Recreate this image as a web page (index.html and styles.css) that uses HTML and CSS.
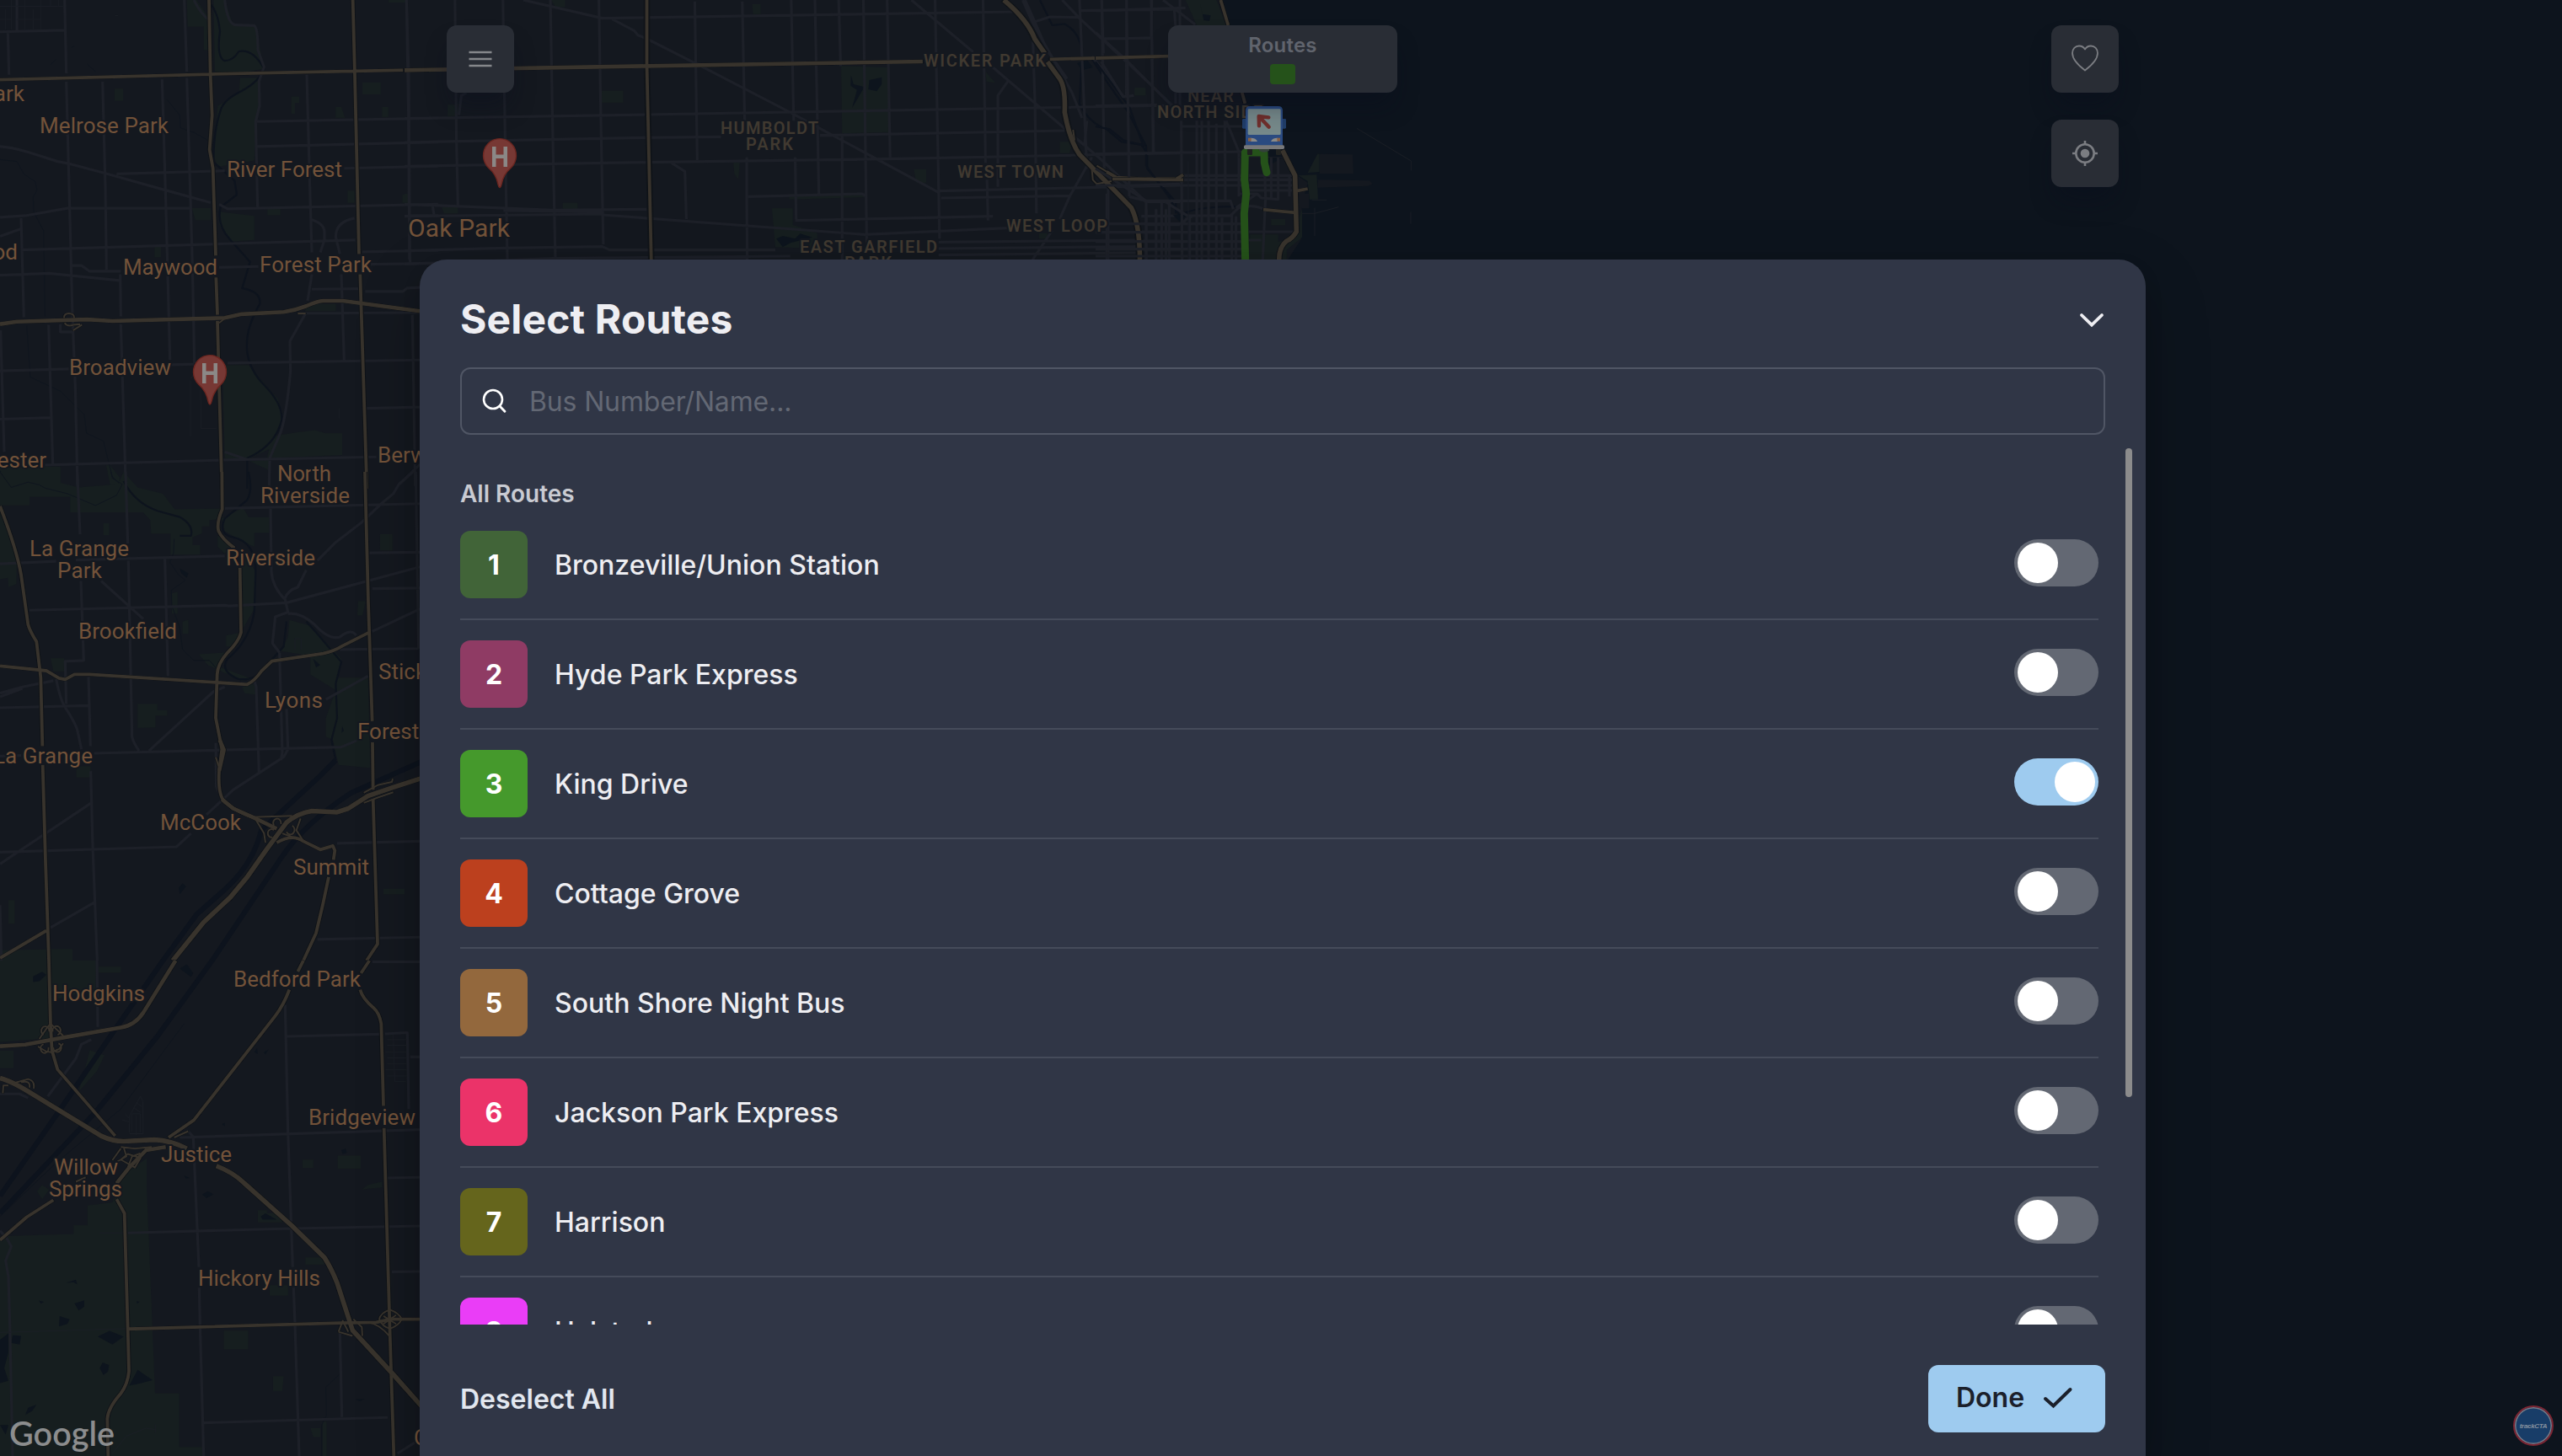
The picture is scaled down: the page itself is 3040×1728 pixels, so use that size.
FILE: index.html
```html
<!DOCTYPE html>
<html lang="en">
<head>
<meta charset="utf-8">
<title>trackCTA</title>
<link rel="stylesheet" href="styles.css">
</head>
<body>
<svg class="map" viewBox="0 0 3040 1728" width="3040" height="1728" aria-hidden="true">
  <defs>
    <g id="hw-a">
      <path class="w4" d="M744,0L749,240L755,370L746,480L758,540L768,820M769,890L774,1010M774,1030L790,1568M1256,0L1263,240L1278,815M1282,880L1306,1568M0,256L750,238L1260,228L1560,223"/>
      <path class="w5" d="M0,1040L60,1032L310,1025L400,1030L800,1020L860,1008L1010,1001Q1050,996 1090,982Q1130,966 1150,965L1220,965L1500,999"/>
      <path class="w3" d="M228,1020Q228,1006 245,1006Q264,1006 264,1020M230,1036Q240,1050 262,1042L285,1040M260,1060L292,1042M800,1022L780,1036M1060,1006L1088,1006"/>
    </g>
    <g id="hw-b">
      <path class="w4" d="M790,0L791,120Q770,165 778,190Q790,215 835,245M854,308L858,515Q850,545 810,580Q775,615 773,650L768,790L790,890L780,960Q775,1035 800,1060Q850,1095 900,1108M1299,0L1311,420L1325,800M1326,868L1328,1020M1328,1050L1344,1515L1305,1568M0,110Q60,250 75,330L100,490Q106,510 130,545L145,660L151,880M152,940L162,1250L174,1568M0,623L165,638L210,662L232,666L265,650L320,650L880,682Q905,672 930,640L968,607L1150,583Q1190,575 1220,558L1312,516M985,1190Q1040,1160 1080,1185L1140,1212L1185,1200L1192,1215L1187,1245M1170,1300Q1150,1390 1125,1480L1080,1568M0,1560L165,1472"/>
      <path class="w5" d="M782,860L797,892L780,960M790,1050L830,1080L900,1108L985,1145"/>
      <path class="w6" d="M615,1568L725,1445L820,1365L880,1300L950,1210L1020,1125Q1060,1095 1110,1088L1200,1092L1240,1080L1310,1040L1400,1012L1500,983"/>
      <path class="w3" d="M900,1108L1040,1104M910,1115L940,1160L945,1190M1070,1112L1055,1150L1080,1185M768,915L778,945M1295,1030L1345,1005L1395,995L1398,985M1295,1062L1345,1045L1400,1028M975,1135A14,14 0 1 1 1000,1130M970,1172A13,13 0 1 1 975,1150M1020,1155A15,15 0 1 0 1040,1135M1005,1160L1080,1185"/>
    </g>
    <g id="hw-c">
      <path class="w4" d="M174,0L180,205L185,285M185,285L205,345L410,555M1080,0L1060,35M1030,92Q1010,140 980,175L690,505L600,560M1315,0L1285,40M1282,92Q1290,120 1330,150Q1350,165 1357,200L1365,460M1367,530L1388,1180L1402,1568M0,885L95,812L190,758M415,755L443,800L455,1166L459,1300Q455,1340 430,1370Q385,1415 382,1450L385,1568M455,1166L1210,1147L1340,1145L1390,1135L1495,1135"/>
      <path class="w5" d="M625,0L510,165Q480,205 430,212L230,243L90,266L0,271M590,590L520,600L460,655L415,705"/>
      <path class="w6" d="M0,372Q40,380 120,425L360,555Q400,572 440,572L550,567Q610,570 665,595M770,650Q830,670 870,705L1040,840L1155,940Q1180,975 1200,1020L1255,1170L1400,1310L1500,1410"/>
      <path class="w3" d="M140,248L168,212L180,200L198,215L225,238M135,272L165,288L185,290L210,280L225,262M155,235A14,14 0 1 1 175,225M188,225A14,14 0 1 1 205,235M155,265A14,14 0 1 0 172,275M190,275A14,14 0 1 0 208,262M40,390L100,375Q125,380 120,405M75,385Q110,378 105,402M10,420L12,395L30,395M430,590L480,595L540,590M400,632L430,595M410,640L450,620L440,590M430,630L480,655L500,625L455,612ZM455,655L470,620L500,610M620,560L670,540M1350,1135Q1355,1115 1388,1105Q1420,1115 1430,1135Q1420,1155 1388,1165Q1360,1158 1350,1135M1365,1125L1410,1150M1410,1122L1365,1150M1310,1145Q1350,1150 1388,1190M1205,1175L1220,1140L1240,1175M1205,1175L1255,1188M1290,1188L1288,1160L1258,1135M270,700L305,686"/>
    </g>
    <g id="hw-d">
      <path class="w4" d="M490,0L490,230L499,925M1305,211L1568,200M1420,612L1440,632L1500,637L1568,637"/>
      <path class="w5" d="M0,250L490,235L1048,219"/>
      <path class="w6" d="M1212,0Q1260,70 1275,140L1295,190M1300,220L1325,280Q1337,310 1335,400Q1345,500 1365,550L1470,740Q1487,800 1487,925"/>
      <path class="w3" d="M1390,600L1392,640L1400,655L1430,645M1400,590L1440,632L1438,648M1352,462L1355,500"/>
    </g>
    <g id="hw-e">
      <path class="w4" d="M445,0L472,90M520,325L532,368M0,207L258,200M60,637L312,640M288,637L312,622M715,680L755,672M597,746L710,757"/>
      <path class="w6" d="M665,535L710,625L715,825Q700,850 680,858Q653,880 653,925"/>
    </g>
  </defs>

  <rect class="land" width="3040" height="1728"/>
  <path class="water" d="M1447,0L1460,30L1476,110L1500,200L1525,185L1537,207L1552,217L1545,240L1544,284L1527,310V1728H3040V0Z"/>

  <g transform="scale(.333333 .3699)">
    <path class="park" d="M665,0H700L745,60V160H725V85H668ZM760,0H800L830,80L910,85L940,220L850,235L765,232ZM855,250H925V340L910,390L905,515L775,535L760,500L775,340L850,300ZM785,680L905,693V770L820,775L780,720ZM683,668H750V706H695ZM792,1172H885L990,1280L1005,1340L960,1440L880,1475L800,1470ZM970,1400L1050,1388L1120,1380L1160,1390H1218V1460L950,1470ZM1100,975H1195V998H1085ZM1290,265H1355V303H1290ZM408,285H438V323H408ZM1037,310H1065V330H1050V365H1037ZM1195,343H1215L1228,378H1195ZM1360,343H1382V375H1360ZM1237,612H1262V650H1237ZM1432,625H1452V650H1432ZM952,670H998V690H952ZM550,790H573V825H550ZM0,1500L215,1497V1568H0ZM378,1493H392L425,1530V1568H395ZM890,1480L960,1475V1510ZM1383,0H1445V8H1383Z"/>
    <path class="river" d="M740,5Q775,30 783,100Q770,185 800,195Q830,195 850,165Q900,155 940,220Q925,260 860,292Q795,320 785,355Q760,420 760,520L835,580L843,625L785,665Q770,720 820,770L890,840L862,925Q930,935 925,975Q870,1060 880,1130Q890,1190 940,1235Q1010,1300 1002,1350Q980,1430 880,1470V1568"/>
    <path class="creek" d="M0,512L60,518L85,558L125,582L132,610L118,632L120,680L155,740L160,1015M95,1045L108,1210L215,1255L300,1330L308,1390L368,1415L400,1530L435,1560M0,1510L40,1565L100,1548L160,1560M595,320L640,370L642,410L690,425L740,450M180,208L200,190M310,205L340,230M255,152L265,148"/>
    <path class="road" d="M28,105L32,240M0,102L230,97M230,0L236,235M236,262L248,670L258,1015L268,1240L276,1568M365,262L375,600L379,865M577,255L590,640L605,1155M656,0L665,230M665,250L685,850L692,1165M1092,240L1103,600L1110,810M915,390L1560,379M915,470L1560,456M1225,540L1560,533M0,470Q40,472 100,488L205,518L240,524L370,555L580,608L750,650M780,655L810,670L1560,655M415,558L800,548M0,697L90,692L240,668H680M0,758L75,734M75,700L85,1018M75,802L800,782L1265,770M1290,808L1560,803M255,852H290L318,870H430M0,883L175,877L425,900M428,880L430,1015M430,1040L448,1568M780,858L920,855M1320,848L1560,845M1110,928L1290,926M1300,935H1435L1450,924L1495,922M1110,705Q1155,718 1155,745V770L1140,810M1262,700Q1195,712 1195,760L1210,815M1110,880L1095,965M1215,880L1225,1155M1088,1005L1495,1003M1088,1005L1032,1095L1034,1190Q1020,1330 1000,1385L960,1470L958,1568M810,1165L1495,1155M608,1170L690,1168M0,1190L245,1184M0,1345L182,1340M173,1042L188,1490M2,1060L15,1450M160,1492L800,1476L1340,1466M800,1450L880,1475M1305,1310L1495,1306M1468,1010L1478,1560M1447,0L1455,230L1458,690L1460,850M690,0Q715,45 745,65M800,0Q810,80 840,80L905,82Q918,90 918,160L940,215L922,260L924,340L910,390L917,665M1495,1490L1420,1555M1540,660L1545,690M1460,692H1560M215,1040V1065H262M60,0V98"/>
    <path class="lane" d="M0,20H225M0,62H40M60,62H145M20,30V95M40,0V95M88,0V95M118,30V95M145,0V95M180,0V20M208,0V20M678,1220V1400M690,1200L680,1215M714,1250L716,1375H770M1208,1310V1343M410,50H420"/>
    <use href="#hw-a" class="casing"/><use href="#hw-a" class="hwy"/>
  </g>

  <g transform="translate(0 560) scale(.333333 .3699)">
    <path class="park" d="M0,0H215V35L280,50L420,40L440,0L490,50L580,70L622,120L790,118V150L745,155V175H718V198L685,210V235H712V265H607V198H538L535,155L510,130H250V80H105V107H0ZM0,130L50,240L60,300L58,360L30,370L28,340L0,345ZM865,115L885,145H958V195H905V240L865,225L800,190L790,150ZM775,205L830,235L800,262L775,240ZM860,250L910,320L905,440L860,510ZM805,525L860,515L830,560H805ZM708,585L800,580L780,625L900,665L860,670L740,620ZM1030,475L1110,495L1215,600L1200,660H1310L1318,950L1205,940L1185,860L1160,850V790L1195,700L1105,650V590L1000,575L1025,530ZM490,745H560V765H595V782H553V820L490,822ZM1353,200H1397V252H1353ZM180,598H228V640H190ZM1365,1338H1440V1355H1365ZM30,1375H52V1450H30ZM0,1535L258,1530V1568H0ZM368,165H388V203H368ZM612,390L632,385V455H612ZM650,480L670,475V520H650ZM1275,415H1302L1290,460H1272ZM862,690L905,680L910,715L870,710ZM272,945H322V980H272Z"/>
    <path class="canal" d="M1500,930L1250,1030Q1080,1130 1000,1240L755,1568M1195,925L1140,975L930,1150Q900,1260 800,1340L700,1420L580,1568"/>
    <path class="river" d="M885,0Q900,60 880,90L800,150Q775,200 830,210Q910,225 910,320L905,450Q890,540 810,600Q780,640 850,665Q910,670 940,630L1010,560L1020,480M1090,480L1130,520L1215,610L1195,680L1200,790L1180,860L1195,925M440,30Q480,100 560,125L640,145Q690,170 680,205H640"/>
    <path class="creek" d="M0,0L40,50L100,33L140,42L160,52L240,70L340,108L415,75L435,40L400,20L395,0M620,215L618,260L605,290L635,330L660,348L610,380L612,430L640,500L650,570L690,605H745L780,640"/>
    <path class="water" d="M640,310L670,325L665,340L645,325ZM1115,600L1140,620L1125,628ZM636,1335L650,1320L662,1330L640,1355ZM1218,815L1224,830L1216,838Z"/>
    <path class="road" d="M275,0L285,200M288,350L298,605L232,608L236,745M447,0L455,230M457,285L470,850Q475,870 495,895M587,280L598,655M0,295L200,287M270,283L800,270M105,444L800,428L815,430L1020,420L1495,305M360,350L510,472M0,757L315,750M315,658L322,880M323,960L330,1200L346,1568M0,710L80,690L190,670M0,722L80,695M200,665Q215,735 235,760Q275,815 278,840L290,890M335,903L1215,883L1270,862M530,895L760,705L800,690M1160,730L1310,655M905,670L912,690L922,965M995,580L1005,900L1000,925M1020,760L1025,890L1010,915L830,1020L735,1100M680,1160L628,1203L0,1220M0,1258L325,1062M180,1462L335,1382M0,1390L5,1568M768,870L770,1010L790,1050M800,117L1495,102M963,117L966,320Q970,370 1015,410L1025,450L980,465L970,550L995,580M1015,405Q1025,380 1060,370L1090,315M1130,285L1190,230L1290,160L1360,100L1400,70L1420,40L1470,0M1025,455Q1070,450 1120,490Q1170,540 1210,530Q1250,500 1268,525M1315,260L1495,258M1325,375L1495,373M1325,512L1495,440M1210,570L1490,567M1480,0L1490,567M1200,1192L1495,1185M1130,1500L1495,1493M0,912L75,910"/>
    <path class="lane" d="M1050,570V535H1072V570"/>
    <use href="#hw-b" class="casing"/><use href="#hw-b" class="hwy"/>
  </g>

  <g transform="translate(0 1140) scale(.333333 .375)">
    <path class="park" d="M0,0H340V90L190,125L180,245L0,258ZM350,20H430V38H350ZM0,285H48V340H0ZM320,283L372,300L345,350L280,415ZM20,872L262,865V838H312V775L400,765L445,670L500,640L522,625V710L552,1370H637V1540H720V1568H0V875ZM797,1172H883V1230H797ZM972,1315H1010L1005,1362H972ZM1202,617H1284V658H1202ZM1077,630H1115V656H1077ZM960,1028H1025V1060H960ZM918,790H950V800H1005V828H918ZM1087,940H1155V962H1087ZM1105,1480H1140V1508H1115ZM1148,1460H1162V1568H1148ZM132,730L150,710L175,725L150,755ZM1288,725L1310,710L1360,700V718L1310,722Z"/>
    <path class="canal" d="M755,0L560,240L340,480L0,800M580,0L400,230L200,490L0,745"/>
    <path class="creek" d="M655,200L430,470L200,640L0,810M1208,1310L1160,1350L1162,1440L1145,1470V1568"/>
    <path class="water" d="M118,50L150,35L165,45L140,65L118,68ZM640,25L665,12L688,40L680,52ZM265,1085L300,1075V1095L280,1107ZM212,1125L248,1135L240,1150L210,1158ZM348,1190L390,1172L440,1190L400,1215ZM355,1290L365,1272L388,1280L385,1300L368,1312ZM460,1345L490,1295L543,1328L490,1340ZM0,1200L30,1180V1240L15,1290L30,1330L0,1337ZM45,1185L75,1188L70,1215L40,1210ZM90,1438L100,1415L130,1405L115,1425ZM720,740L740,730L760,740L735,752ZM928,810L945,800L985,820L935,820ZM905,290L915,278L918,295ZM938,290L955,282L945,297ZM1215,600L1230,595L1235,608L1220,612ZM790,518L800,513V524ZM655,680L675,688L662,690ZM138,1076L156,1080L146,1086ZM486,1078L497,1080L488,1086ZM235,1020L270,1010L275,1025L262,1018ZM1265,1388L1298,1388L1280,1394ZM0,1470H30L20,1500Z"/>
    <path class="road" d="M345,0L348,210M325,250L290,265L270,310L170,430M1015,140L1025,540L1042,970M1045,1035L1050,1150L1065,1568M640,560L1495,535M688,560L708,970M709,1035L712,1150L725,1568M455,862L1040,848L1495,840M1020,240L1350,233M1370,232L1450,228L1455,470M1460,305H1495M1380,688L1495,686M1395,985L1495,984M725,1463L1380,1446M1210,1175L1217,1445M25,880L40,905L20,950L30,1000L35,1150L45,1568M0,422H70L100,435M670,540L690,560M1325,4H1495M1495,1515L1415,1560M0,855L25,880"/>
    <path class="lane" d="M0,1177L450,1165M355,862H455M1400,235L1405,383H1445M1378,250H1448M1378,268H1448M1372,290H1448M1378,308H1448M1378,326H1448M1372,345H1448M1378,365H1448M460,545L462,490L500,430L508,445L510,548H460M470,540V485H500V545M485,490V552M435,505L460,510M445,485L462,500M475,465L500,480M485,450L505,462M400,1560L450,1505L520,1480L555,1485M553,1468V1495"/>
    <use href="#hw-c" class="casing"/><use href="#hw-c" class="hwy"/>
  </g>

  <g transform="translate(480 0) scale(.58673 .333333)">
    <path class="park" d="M883,235L980,240V470L885,475ZM743,742H785V800L835,830V885L750,880ZM397,323H442V365H397ZM297,0H325V25H305ZM703,15H720V50H705ZM665,578H678L675,638L667,620ZM1030,603H1055V650H1035ZM1325,505H1350L1345,545H1325ZM320,722H350V745H320ZM75,738H108V760H80ZM87,373H108V413H87ZM0,690H8V722H0ZM1175,255L1195,295L1177,290ZM1477,312H1498V340H1477ZM778,690H930V702L778,710ZM1283,830H1300V850H1283Z"/>
    <path class="river" d="M1285,0L1310,90L1335,85Q1370,120 1370,200L1365,370Q1385,440 1420,460L1450,505L1490,515L1502,545V600L1520,640L1560,720V760M1390,210L1420,290L1460,390L1500,520"/>
    <path class="water" d="M1360,225L1380,212L1392,240L1370,250ZM940,285L965,275V300L955,325L938,318ZM903,268L908,300L930,310L920,340L905,385L915,320L902,305ZM752,850L765,840L790,850L800,832L825,845L780,865L765,880Z"/>
    <path class="road" d="M4,0L8,410L10,925M102,0L105,500L108,730M199,0L204,560L208,925M295,0L300,500L305,925M393,0L397,420L402,870M587,5L592,570M683,5L688,430M692,560V700L693,925M782,0L787,430M790,560L792,780M830,0L838,690M878,0L882,235M885,480V925M928,0L935,900M976,0L982,560M1073,0L1082,850M1170,0L1175,580M1178,640L1180,785M1270,100L1275,370L1278,760M0,422L490,408L1568,375M0,507L490,490L640,487M840,482L1335,465M0,592L490,578L1000,565L1568,545M695,700L925,690L935,700M1080,680L1568,660M1085,705L1345,697M790,785L1190,770M400,765L930,835L1220,812M0,727L300,748L490,745M0,770L400,762M200,750L400,755M0,893L200,883L400,878L415,890H750M0,940L300,920L780,912M1080,862L1480,855M1080,885L1480,878M1080,908L1480,900M240,0L400,65L1235,42M420,68L465,110L472,125L490,138L610,245L780,400L1080,685M1025,0L1150,185M1190,240L1410,570L1500,720M1330,0L1365,65L1460,220L1568,400M1365,38L1568,33M1250,0L1270,80L1350,330L1370,420M1255,0L1300,180L1340,280M1270,80L1305,60L1365,62M1415,138L1510,135M1390,200L1455,345L1475,340M1220,290L1200,340V665M540,580L567,610L570,780M1390,560L1345,700L1325,780M1310,820L1270,925M110,410L115,340L125,330M1365,0L1380,600M1410,0L1415,600M1460,0V345M1510,0L1515,540M1568,0V400M1423,660V925M1500,718H1568M1500,745V925M1520,745V925M1540,745V925M1500,800H1568M1490,825H1568M1490,858H1568M1490,888H1568M1380,430L1375,520M1490,770L1568,768"/>
    <use href="#hw-d" class="casing"/><use href="#hw-d" class="hwy"/>
  </g>

  <g transform="translate(1300 0) scale(.333333)">
    <path class="park" d="M320,0H430L465,90H360ZM138,315H178V340H138ZM790,548H797V612L755,615ZM722,625L787,622L792,710H762L755,645ZM550,835H650V925H545ZM735,745V845L680,890V925H550V880L700,850ZM625,780H675V802H625Z"/>
    <path class="land" d="M797,548L915,550L918,618H797ZM792,640L975,643L985,655L970,662L790,668ZM715,690H760V742H735L715,735Z"/>
    <path class="river" d="M0,450L50,460L100,500L180,520V590L260,700L300,770M0,220L120,380L170,520M300,770Q340,735 500,735"/>
    <path class="water" d="M372,12L380,50L410,55L405,75L385,72ZM275,765L330,760L300,790Z"/>
    <path class="road" d="M22,0L28,190M110,0L120,700M200,130L205,540M280,30L285,100M285,330V370M200,0L198,130M0,38L320,28M30,138L195,135M240,0L355,88M0,115L100,205L265,370M20,220L98,345L110,342M0,377L220,374M0,548L520,540M305,450H530M305,430L308,925M360,430V925M378,430V925M402,430V925M430,440V925M460,430L462,720M485,760V925M465,430L510,540V700M310,625H520M545,625H700M310,640H520M545,640H700M300,660H520M545,660H700M545,678H700M180,715H480L490,745M330,768H480L510,740Q560,725 600,745M510,690L575,690L590,705L650,710V560M575,690L500,740M600,560L605,700L595,925M625,560V710M690,620V700M0,660L130,660L300,655M0,600L180,715V925M120,700L180,715M235,720V925M262,720V925M40,690V925M250,720L330,770M310,800Q320,775 345,770M0,797H520M0,827H520M0,860H520M0,887H520M0,912H520M545,825H720M545,855H590M335,775V925M450,775V925M500,770V925"/>
    <path class="lane" d="M930,457L1123,573V607M1122,755V797M780,740V840M735,760H780L865,737M770,712H822M510,560H690M330,575V925"/>
    <use href="#hw-e" class="casing"/><use href="#hw-e" class="hwy"/>
  </g>

  <g class="hood">
    <text x="1096" y="79" textLength="145">WICKER PARK</text>
    <text x="855" y="159" textLength="116">HUMBOLDT</text>
    <text x="885" y="178" textLength="56">PARK</text>
    <text x="1136" y="211" textLength="126">WEST TOWN</text>
    <text x="1194" y="275" textLength="120">WEST LOOP</text>
    <text x="949" y="300" textLength="163">EAST GARFIELD</text>
    <text x="1002" y="319" textLength="56">PARK</text>
    <text x="1409" y="121" textLength="55">NEAR</text>
    <text x="1373" y="140" textLength="125">NORTH SIDE</text>
  </g>
  <g class="town">
    <text x="29" y="120" text-anchor="end">Park</text>
    <text x="47" y="158" textLength="153">Melrose Park</text>
    <text x="269" y="210" textLength="137">River Forest</text>
    <text class="town-lg" x="484" y="281" textLength="121">Oak Park</text>
    <text x="21" y="308" text-anchor="end">wood</text>
    <text x="146" y="326" textLength="112">Maywood</text>
    <text x="308" y="323" textLength="133">Forest Park</text>
    <text x="82" y="445" textLength="121">Broadview</text>
    <text x="55" y="555" text-anchor="end">chester</text>
    <text x="448" y="549">Berwyn</text>
    <text x="329" y="571" textLength="64">North</text>
    <text x="309" y="597" textLength="106">Riverside</text>
    <text x="35" y="660" textLength="118">La Grange</text>
    <text x="68" y="686" textLength="53">Park</text>
    <text x="268" y="671" textLength="106">Riverside</text>
    <text x="93" y="758" textLength="117">Brookfield</text>
    <text x="449" y="806">Stickney</text>
    <text x="314" y="840" textLength="69">Lyons</text>
    <text x="424" y="877">Forest View</text>
    <text x="-8" y="906" textLength="118">La Grange</text>
    <text x="190" y="985" textLength="96">McCook</text>
    <text x="348" y="1038" textLength="90">Summit</text>
    <text x="62" y="1188" textLength="110">Hodgkins</text>
    <text x="277" y="1171" textLength="151">Bedford Park</text>
    <text x="366" y="1335" textLength="127">Bridgeview</text>
    <text x="191" y="1379" textLength="84">Justice</text>
    <text x="64" y="1394" textLength="76">Willow</text>
    <text x="58" y="1420" textLength="87">Springs</text>
    <text x="235" y="1526" textLength="145">Hickory Hills</text>
    <text x="491" y="1715">Ch</text>
  </g>

  <g class="pin" transform="translate(249 442.500)">
    <path d="M0,37.500Q-1.500,37 -2,34Q-4,22 -13,14A19.500,20 0 1 1 13,14Q4,22 2,34Q1.500,37 0,37.500Z"/>
    <path class="pin-h" d="M-9,-11.500H-4.500V-2H4.500V-11.500H9V12.500H4.500V2.500H-4.500V12.500H-9Z"/>
  </g>
  <g class="pin" transform="translate(593 185.500)">
    <path d="M0,37Q-1.500,36.500 -2,33.500Q-4,21.500 -13,14A19.500,20 0 1 1 13,14Q4,21.500 2,33.500Q1.500,36.500 0,37Z"/>
    <path class="pin-h" d="M-9,-11.500H-4.500V-2H4.500V-11.500H9V12.500H4.500V2.500H-4.500V12.500H-9Z"/>
  </g>

  <g transform="translate(1300 0) scale(.333333)">
    <path class="route" d="M600,545L601,580L609,614M532,543H600M532,543L530,640L536,690L529,760L533,930"/>
    <rect x="540" y="525" width="18" height="27" rx="4" fill="#1f2120"/>
    <rect x="642" y="525" width="18" height="27" rx="4" fill="#1f2120"/>
    <path d="M582,528H618V536Q600,548 582,536Z" fill="#33403a"/>
    <rect x="522" y="423" width="20" height="35" rx="4" fill="#203d68"/>
    <rect x="658" y="423" width="20" height="35" rx="4" fill="#203d68"/>
    <path d="M534,518V394Q534,378 550,378H650Q666,378 666,394V518Z" fill="#2a4a80"/>
    <rect x="542" y="388" width="117" height="92" rx="4" fill="#76898a"/>
    <rect x="528" y="517" width="144" height="14" rx="5" fill="#77787b"/>
    <path d="M552,491Q572,491 576,504H552Z" fill="#8a8a88"/><rect x="543" y="491" width="11" height="12" fill="#8a6146"/>
    <path d="M648,491Q628,491 624,504H648Z" fill="#8a8a88"/><rect x="646" y="491" width="11" height="12" fill="#8a6146"/>
    <path class="arrow" d="M617,452L583,416M582,448L581,414L616,418"/>
  </g>
  <text class="google" x="11" y="1716" textLength="125" lengthAdjust="spacingAndGlyphs">Google</text>
</svg>

<header class="controls">
  <button class="ctl" aria-label="Menu">
    <svg width="28" height="20" viewBox="0 0 28 20"><path d="M.5,2H27.500M.5,10H27.500M.5,18H27.500" stroke="#85878b" stroke-width="2.600"/></svg>
  </button>
  <div class="routes-pill"><span>Routes</span><i class="chip"></i></div>
  <div class="ctl-stack">
    <button class="ctl" aria-label="Favorites">
      <svg class="heart" width="34" height="34" viewBox="0 0 34 34"><path d="M17,31.500C11,27 2,20 2,11C2,6 5.500,2.500 10,2.500C13.500,2.500 15.500,4 17,6.500C18.500,4 20.500,2.500 24,2.500C28.500,2.500 32,6 32,11C32,20 23,27 17,31.500Z" fill="none" stroke="#7b7d82" stroke-width="1.800" stroke-linejoin="round"/></svg>
    </button>
    <button class="ctl" aria-label="Locate me">
      <svg width="30" height="30" viewBox="0 0 30 30" fill="none" stroke="#7b7d82"><circle cx="15" cy="15" r="10.700" stroke-width="2.600"/><path d="M15,0V4M15,26V30M0,15H4M26,15H30" stroke-width="2.600"/><circle cx="15" cy="15" r="5.300" fill="#7b7d82" stroke="none"/></svg>
    </button>
  </div>
</header>

<div class="badge"><span>trackCTA</span></div>

<section class="sheet">
  <div class="sheet-head">
    <h1>Select Routes</h1>
    <svg width="36" height="20" viewBox="0 0 36 20"><path d="M6,4L18,15.500L30,4" fill="none" stroke="#eeeef2" stroke-width="3.800" stroke-linecap="round" stroke-linejoin="miter"/></svg>
  </div>
  <div class="search">
    <svg width="30" height="30" viewBox="0 0 30 30"><circle cx="13" cy="13" r="11" fill="none" stroke="#fff" stroke-width="2.600"/><path d="M21,21L27,27.300" stroke="#fff" stroke-width="2.800" stroke-linecap="round"/></svg>
    <span>Bus Number/Name...</span>
  </div>
  <div class="list">
    <h2>All Routes</h2>
    <div class="row"><b class="num r1">1</b><span class="name">Bronzeville/Union Station</span><i class="toggle"></i></div>
    <div class="row"><b class="num r2">2</b><span class="name">Hyde Park Express</span><i class="toggle"></i></div>
    <div class="row"><b class="num r3">3</b><span class="name">King Drive</span><i class="toggle on"></i></div>
    <div class="row"><b class="num r4">4</b><span class="name">Cottage Grove</span><i class="toggle"></i></div>
    <div class="row"><b class="num r5">5</b><span class="name">South Shore Night Bus</span><i class="toggle"></i></div>
    <div class="row"><b class="num r6">6</b><span class="name">Jackson Park Express</span><i class="toggle"></i></div>
    <div class="row"><b class="num r7">7</b><span class="name">Harrison</span><i class="toggle"></i></div>
    <div class="row"><b class="num r8">8</b><span class="name">Halsted</span><i class="toggle"></i></div>
    <i class="scrollbar"></i>
  </div>
  <footer class="sheet-foot">
    <button class="deselect">Deselect All</button>
    <button class="done"><span>Done</span>
      <svg width="36" height="28" viewBox="0 0 36 28"><path d="M3,15L12.500,23.500L32.500,4" fill="none" stroke="#1b202b" stroke-width="4" stroke-linecap="round"/></svg>
    </button>
  </footer>
</section>
</body>
</html>
```
FILE: styles.css
```css
* { box-sizing: border-box; }
body {
  margin: 0;
  position: relative;
  width: 3040px;
  height: 1728px;
  overflow: hidden;
  background: #0d141d;
  font-family: Inter, "Liberation Sans", sans-serif;
}
h1, h2 { margin: 0; }
button { border: 0; padding: 0; background: none; font: inherit; }

/* map */
.map { position: absolute; inset: 0; display: block; }
.map path { vector-effect: non-scaling-stroke; }
.land { fill: #14181f; }
.water { fill: #0d141d; }
.park { fill: #161e1f; }
.road, .lane, .river, .creek, .canal { fill: none; stroke-linejoin: round; }
.road { stroke: #1d2028; stroke-width: 3.2px; }
.lane { stroke: #1a1e25; stroke-width: 1px; }
.river { stroke: #0d131d; stroke-width: 2.2px; }
.creek { stroke: #0f151e; stroke-width: 1px; }
.canal { stroke: #0d131d; stroke-width: 6px; }
.hwy { fill: none; stroke: #38332c; stroke-linejoin: round; }
.casing { fill: none; stroke: #0f1318; stroke-linejoin: round; }
.w3 { stroke-width: 2px; }
.w4 { stroke-width: 3.8px; }
.w5 { stroke-width: 4.6px; }
.w6 { stroke-width: 5.6px; }
.casing { filter: drop-shadow(3px 0 0 #0f1318) drop-shadow(-3px 0 0 #0f1318); }
.town, .hood { font-family: Roboto, sans-serif; paint-order: stroke; stroke: #14181f; stroke-width: 4px; stroke-linejoin: round; }
.town { font-size: 26px; fill: #725239; }
.town-lg { font-size: 30px; }
.hood { font-size: 20px; font-weight: 600; fill: #403930; }
.pin path { fill: #773834; stroke: #6b2620; stroke-width: 1.4px; }
.pin .pin-h { fill: #8b8886; stroke: none; }
.map .route { fill: none; stroke: #25521a; stroke-width: 9px; stroke-linecap: round; stroke-linejoin: round; }
.map .arrow { fill: none; stroke: #702f2c; stroke-width: 4.4px; stroke-linecap: round; stroke-linejoin: round; }
.google { font-family: Lato, sans-serif; font-weight: 600; font-size: 40px; fill: #8c8d8e; }

/* floating controls */
.controls {
  position: relative;
  width: 2048px;
  margin-left: 498px;
  padding: 30px 32px 0;
  display: flex;
  justify-content: space-between;
  align-items: flex-start;
}
.ctl, .routes-pill {
  height: 80px;
  border-radius: 12px;
  background: #292d35;
  box-shadow: 0 20px 30px -6px rgba(8, 14, 28, .45);
}
.ctl { width: 80px; display: flex; align-items: center; justify-content: center; }
.heart { margin-bottom: 2px; }
.ctl-stack { display: flex; flex-direction: column; gap: 32px; }
.routes-pill {
  width: 272px;
  padding-top: 8px;
  display: flex;
  flex-direction: column;
  align-items: center;
  gap: 7px;
  font-size: 24px;
  line-height: 31px;
  font-weight: 600;
  letter-spacing: .2px;
  color: #60646d;
}
.chip { width: 30px; height: 24px; border-radius: 4px; background: #25521a; }

.badge {
  position: absolute;
  right: 10px;
  bottom: 12px;
  width: 48px;
  height: 48px;
  border-radius: 50%;
  border: 2px solid #7b2532;
  background: #183d68;
  box-shadow: inset 0 0 0 1.5px #777c86;
  display: flex;
  align-items: center;
  justify-content: center;
  font: italic bold 8px "Liberation Sans", sans-serif;
  letter-spacing: -.3px;
  color: #85909e;
}

/* bottom sheet */
.sheet {
  position: absolute;
  left: 498px;
  top: 308px;
  width: 2048px;
  height: 1420px;
  padding: 30px 48px 28px;
  border-radius: 32px 32px 0 0;
  background: #303646;
  box-shadow: 0 10px 20px rgba(0, 0, 0, .15), 0 30px 80px rgba(0, 0, 0, .2);
  display: flex;
  flex-direction: column;
}
.sheet-head {
  height: 80px;
  display: flex;
  align-items: center;
  justify-content: space-between;
}
.sheet-head svg { margin: 4px -2px 0 0; }
.sheet-head h1 { padding-top: 2px; font-size: 48px; line-height: 60px; font-weight: 700; letter-spacing: .15px; color: #eeeef2; }
.search {
  height: 80px;
  margin-top: 18px;
  padding-left: 24px;
  border: 2px solid #505665;
  border-radius: 12px;
  display: flex;
  align-items: center;
  gap: 26px;
  font-size: 32px;
  letter-spacing: -.15px;
  color: #636874;
}
.list {
  position: relative;
  height: 1040px;
  margin: 16px -32px 0 0;
  padding: 36px 40px 0 0;
  overflow: hidden;
}
.list h2 { height: 38px; font-size: 28px; line-height: 36px; font-weight: 600; color: #c9cbd2; }
.row {
  height: 130px;
  padding: 24px 0;
  border-bottom: 2px solid #454b5a;
  display: flex;
  align-items: center;
}
.num {
  width: 80px;
  height: 80px;
  border-radius: 12px;
  display: flex;
  align-items: center;
  justify-content: center;
  font-size: 32px;
  font-weight: 700;
  color: #fff;
}
.r1 { background: #416438; }
.r2 { background: #8f3b64; }
.r3 { background: #45992c; }
.r4 { background: #bc401e; }
.r5 { background: #93683d; }
.r6 { background: #eb3369; }
.r7 { background: #65651c; }
.r8 { background: #ea3df7; }
.name { flex: 1; padding-left: 32px; font-size: 32px; font-weight: 500; color: #eeeef2; }
.toggle {
  width: 100px;
  height: 56px;
  margin-bottom: 4px;
  padding: 4px;
  border-radius: 28px;
  background: #636873;
  display: flex;
}
.toggle::after { content: ""; width: 48px; height: 48px; border-radius: 50%; background: #fff; }
.toggle.on { background: #9ecbef; justify-content: flex-end; }
.scrollbar {
  position: absolute;
  top: 0;
  right: 0;
  width: 8px;
  height: 770px;
  border-radius: 4px;
  background: #8c8c8c;
}
.sheet-foot { margin-top: 48px; display: flex; align-items: center; justify-content: space-between; }
.deselect { font-size: 32px; font-weight: 600; color: #e2e7ef; }
.done {
  width: 210px;
  height: 80px;
  padding: 0 38px 3px 33px;
  border-radius: 12px;
  background: #9ecbef;
  display: flex;
  align-items: center;
  justify-content: space-between;
  font-size: 32px;
  font-weight: 600;
  color: #1b202b;
}
```
